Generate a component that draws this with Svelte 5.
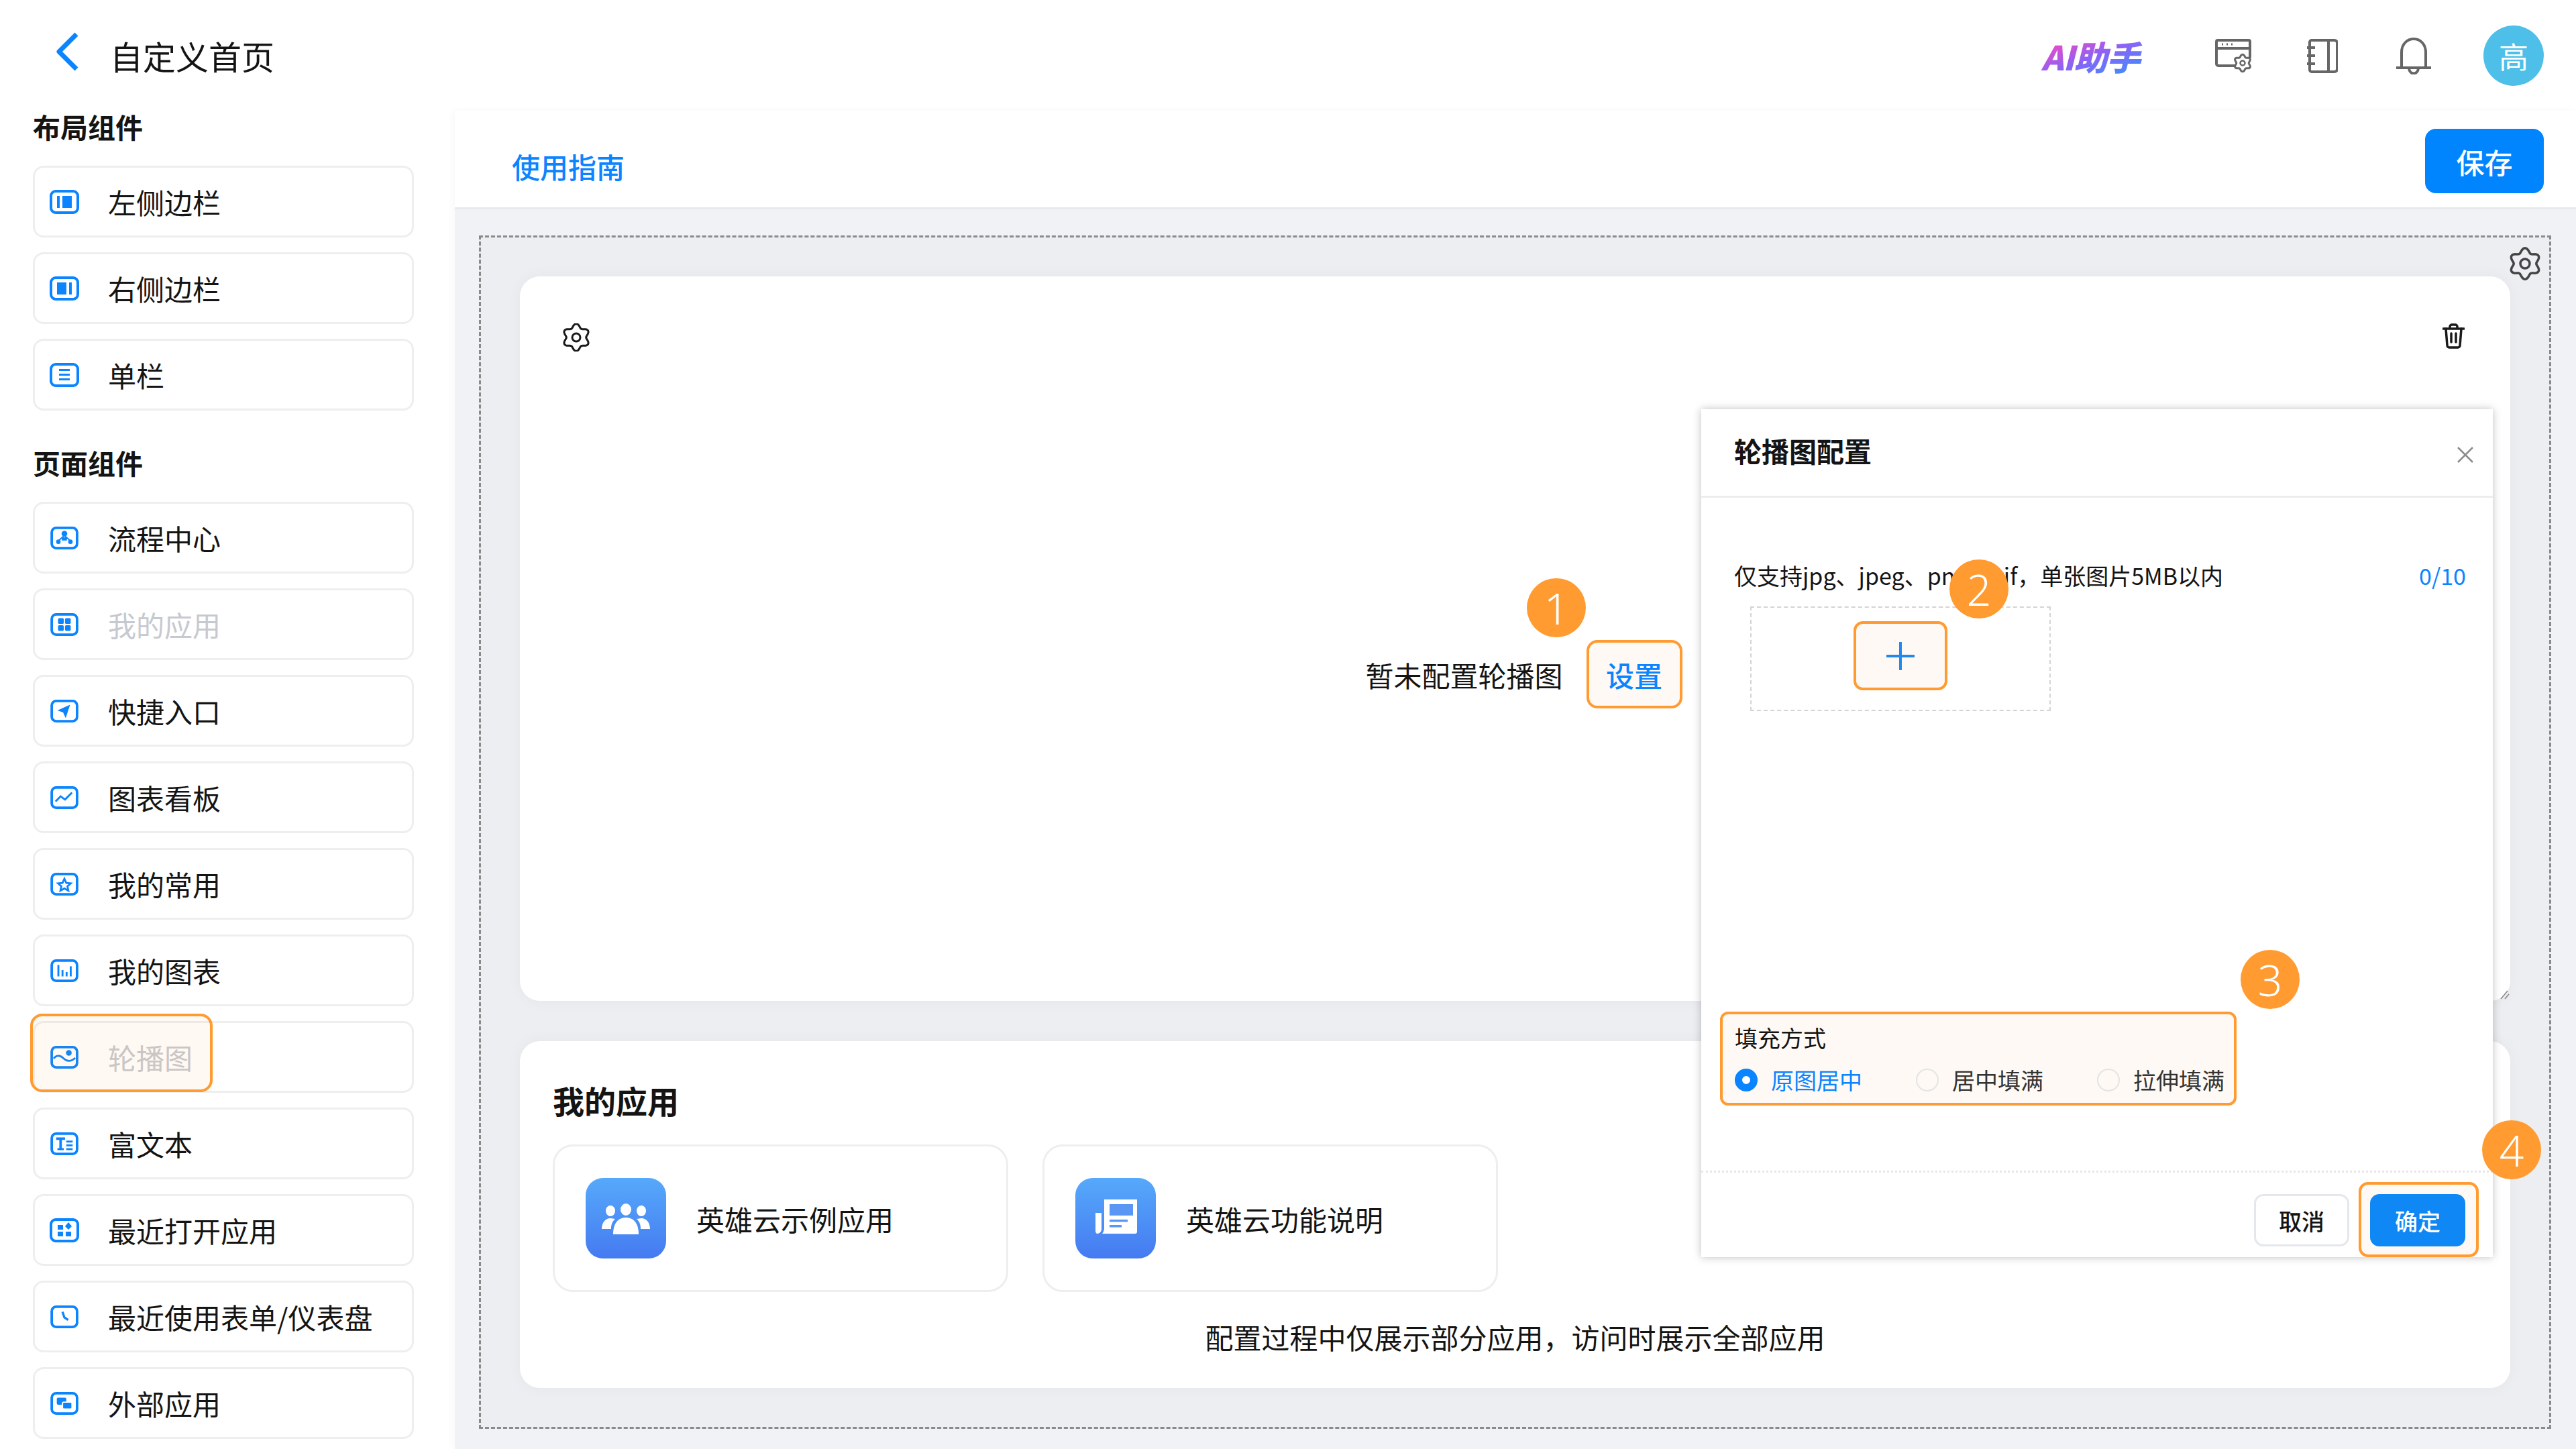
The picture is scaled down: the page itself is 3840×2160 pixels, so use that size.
<script>
  // outline of a scalloped six lobe cog, used by all the settings icons
  function cog(cx, cy, r, amp) {
    let d = '';
    for (let i = 0; i < 96; i++) {
      const t = (i / 96) * Math.PI * 2;
      const rad = r + amp * Math.cos(6 * (t - Math.PI / 2));
      const x = cx + rad * Math.cos(t);
      const y = cy + rad * Math.sin(t);
      d += (i ? 'L' : 'M') + x.toFixed(2) + ' ' + y.toFixed(2);
    }
    return d + 'Z';
  }

  const glyphs = {
    left: '<rect x="11" y="9" width="4" height="18"/><rect x="19" y="9" width="14" height="18"/>',
    right: '<rect x="11" y="9" width="14" height="18"/><rect x="29" y="9" width="4" height="18"/>',
    single: '<rect x="14" y="9" width="16" height="3"/><rect x="14" y="16" width="16" height="3"/><rect x="14" y="23" width="16" height="3"/>',
    flow: '<circle cx="22" cy="11" r="4.5"/><circle cx="12.5" cy="24" r="3.5"/><circle cx="31.5" cy="24" r="3.5"/><path d="M22 14 L13 22 M22 14 L31 22 M19 18h6v3h-6z" stroke="#0a84ff" stroke-width="2"/>',
    apps: '<rect x="12" y="8" width="9" height="9" rx="2"/><rect x="23" y="8" width="9" height="9" rx="2"/><rect x="12" y="19" width="9" height="9" rx="2"/><rect x="23" y="19" width="9" height="9" rx="2"/>',
    quick: '<path d="M31 8 L11 17 L20 20 L24 29Z"/>',
    chart: '<path d="M8 24 L16 16 L23 21 L34 10" fill="none" stroke="#0a84ff" stroke-width="3"/>',
    star: '<path d="M22 9.5 L25 16 L32 16.8 L26.8 21.4 L28.2 28.2 L22 24.8 L15.8 28.2 L17.2 21.4 L12 16.8 L19 16Z" fill="none" stroke="#0a84ff" stroke-width="3"/>',
    bars: '<rect x="11" y="9" width="3" height="18"/><rect x="17.5" y="17" width="3" height="10"/><rect x="24" y="20" width="3" height="7"/><rect x="30.5" y="11" width="3" height="16"/>',
    wave: '<path d="M5 20 C11 13 17 16 21 20 S32 26 39 19" fill="none" stroke="#0a84ff" stroke-width="3"/><circle cx="29" cy="11" r="4.5"/>',
    rich: '<path d="M9 8h14v4h-5v13h3v3h-10v-3h3v-13h-5z"/><rect x="25" y="13" width="10" height="3"/><rect x="25" y="19" width="10" height="3"/><rect x="25" y="25" width="10" height="3"/>',
    recent: '<rect x="12" y="10" width="8" height="7"/><path d="M28 6 L33 12 L28 17 L23 12Z"/><rect x="12" y="20" width="8" height="7"/><rect x="24" y="20" width="8" height="7"/>',
    clock: '<path d="M19 10 L22 19 L28 23" fill="none" stroke="#0a84ff" stroke-width="3.5"/>',
    ext: '<rect x="10" y="9" width="15" height="11" rx="2"/><rect x="19" y="16" width="15" height="11" rx="2" stroke="#fff" stroke-width="2"/>'
  };

  const layoutItems = [
    { label: '左侧边栏', icon: 'left', wide: true },
    { label: '右侧边栏', icon: 'right', wide: true },
    { label: '单栏', icon: 'single', wide: true }
  ];
  const pageItems = [
    { label: '流程中心', icon: 'flow' },
    { label: '我的应用', icon: 'apps', off: true },
    { label: '快捷入口', icon: 'quick' },
    { label: '图表看板', icon: 'chart' },
    { label: '我的常用', icon: 'star' },
    { label: '我的图表', icon: 'bars' },
    { label: '轮播图', icon: 'wave', off: true, mark: true },
    { label: '富文本', icon: 'rich' },
    { label: '最近打开应用', icon: 'recent', wide: true },
    { label: '最近使用表单/仪表盘', icon: 'clock' },
    { label: '外部应用', icon: 'ext' }
  ];
  const fills = [
    { label: '原图居中', on: true },
    { label: '居中填满' },
    { label: '拉伸填满' }
  ];
</script>

{#snippet item(it)}
  <div class="item" class:off={it.off}>
    {#if it.mark}<span class="item-mark"></span>{/if}
    <svg class="item-icon" class:wide={it.wide} viewBox="0 0 44 36" fill="#0a84ff">
      <rect x="2" y="2" width="40" height="32" rx="7" fill="none" stroke="#0a84ff" stroke-width="4" />
      {@html glyphs[it.icon]}
    </svg>
    <span>{it.label}</span>
  </div>
{/snippet}

<div class="app">
  <header class="topbar">
    <div class="page-title">
      <svg class="back" viewBox="0 0 36 60"><path d="M31 4 L5 30 L31 56" /></svg>
      <span>自定义首页</span>
    </div>
    <div class="tools">
      <span class="ai">AI助手</span>
      <svg class="tool win" viewBox="0 0 54 50">
        <path d="M32 40H5a3 3 0 0 1-3-3V4a2 2 0 0 1 2-2h46a2 2 0 0 1 2 2v24" />
        <path d="M2 14H52" />
        <path d="M10 8h2M17 8h2M24 8h2" stroke-width="3" />
        <path d={cog(41, 36, 11, 1.8)} stroke-width="3" fill="#fff" />
        <circle cx="41" cy="36" r="3.5" stroke-width="2.5" />
      </svg>
      <svg class="tool book" viewBox="0 0 47 51">
        <path d="M8 2H42a4 4 0 0 1 4 4V45a4 4 0 0 1-4 4H8a3 3 0 0 1-3-3V5a3 3 0 0 1 3-3Z" />
        <path d="M33 2V49" />
        <path d="M1 13H13M1 25H13M1 37H13" />
      </svg>
      <svg class="tool bell" viewBox="0 0 54 55">
        <path d="M9 44V22C9 10 17 2 27 2S45 10 45 22V44" />
        <path d="M1 45H53" />
        <path d="M20 46C21 56 33 56 34 46" />
      </svg>
      <div class="avatar">高</div>
    </div>
  </header>

  <div class="body">
    <aside class="sidebar">
      <h3>布局组件</h3>
      <div class="items">
        {#each layoutItems as it}{@render item(it)}{/each}
      </div>
      <h3 class="next">页面组件</h3>
      <div class="items">
        {#each pageItems as it}{@render item(it)}{/each}
      </div>
    </aside>

    <main class="main">
      <div class="toolbar">
        <span class="guide">使用指南</span>
        <button class="save">保存</button>
      </div>
      <div class="stage">
        <svg class="stage-gear" viewBox="0 0 50 50">
          <path d={cog(25, 25, 20, 3.2)} />
          <circle cx="25" cy="25" r="7" />
        </svg>

        <section class="card banner">
          <div class="banner-top">
            <svg class="gear" viewBox="0 0 42 42">
              <path d={cog(21, 21, 17.5, 2.8)} />
              <circle cx="21" cy="21" r="6" />
            </svg>
            <svg class="trash" viewBox="0 0 33 38">
              <path d="M1 8H32M11 8V5a3 3 0 0 1 3-3h5a3 3 0 0 1 3 3V8" />
              <path d="M5 8L7 33a3 3 0 0 0 3 3H23a3 3 0 0 0 3-3L28 8" />
              <path d="M13 15V28M20 15V28" />
            </svg>
          </div>
          <div class="empty">
            <span>暂未配置轮播图</span>
            <button class="set">设置</button>
          </div>
          <svg class="resize" viewBox="0 0 14 14"><path d="M1 13L11 1M7 13L13 6" /></svg>
        </section>

        <section class="card apps">
          <h2>我的应用</h2>
          <div class="app-row">
            <div class="app-card">
              <svg class="app-icon" viewBox="0 0 120 120">
                <defs>
                  <linearGradient id="tile" x1="0" y1="0" x2="0" y2="1">
                    <stop offset="0" stop-color="#56a9fb" />
                    <stop offset="1" stop-color="#457af1" />
                  </linearGradient>
                </defs>
                <rect width="120" height="120" rx="26" fill="url(#tile)" />
                <g fill="#fff">
                  <ellipse cx="37" cy="49" rx="7" ry="8" />
                  <ellipse cx="60" cy="47" rx="8" ry="9" />
                  <ellipse cx="83" cy="49" rx="7" ry="8" />
                  <path d="M24 76C24 66 30 60 37 60L44 61C39 66 38 70 38 76Z" />
                  <path d="M96 76C96 66 90 60 83 60L76 61C81 66 82 70 82 76Z" />
                  <path d="M41 84C41 68 48 59 60 59S79 68 79 84Z" />
                </g>
              </svg>
              <span>英雄云示例应用</span>
            </div>
            <div class="app-card">
              <svg class="app-icon" viewBox="0 0 120 120">
                <rect width="120" height="120" rx="26" fill="url(#tile)" />
                <path d="M43 32H92V80a3 3 0 0 1-3 3H40C42 80 43 78 43 74Z" fill="#fff" />
                <path d="M30 52H39V76C39 80 36 83 33 83C31 83 30 81 30 79Z" fill="#fff" />
                <rect x="51" y="39" width="35" height="17" fill="#5a97f5" />
                <rect x="51" y="62" width="27" height="3.5" fill="#5a97f5" />
                <rect x="51" y="70" width="18" height="3.5" fill="#5a97f5" />
              </svg>
              <span>英雄云功能说明</span>
            </div>
          </div>
          <p class="note">配置过程中仅展示部分应用，访问时展示全部应用</p>
        </section>
      </div>
    </main>
  </div>

  <div class="dialog">
    <div class="dialog-head">
      <strong>轮播图配置</strong>
      <svg class="close" viewBox="0 0 24 24"><path d="M1 1L23 23M23 1L1 23" /></svg>
    </div>
    <div class="dialog-body">
      <div class="hint-row">
        <span>仅支持jpg、jpeg、png、gif，单张图片5MB以内</span>
        <span class="count">0/10</span>
      </div>
      <div class="upload">
        <div class="plus">
          <svg viewBox="0 0 44 44"><path d="M22 1V43M1 22H43" /></svg>
        </div>
      </div>
      <div class="fill-box">
        <div class="fill-label">填充方式</div>
        <div class="radios">
          {#each fills as f}
            <div class="radio" class:on={f.on}>
              <i></i>
              <span>{f.label}</span>
            </div>
          {/each}
        </div>
      </div>
    </div>
    <div class="dialog-foot">
      <button class="cancel">取消</button>
      <div class="ok-wrap"><button class="ok">确定</button></div>
    </div>
  </div>

  <div class="badge b1">1</div>
  <div class="badge b2">2</div>
  <div class="badge b3">3</div>
  <div class="badge b4">4</div>
</div>

<style>
  :global(body) {
    margin: 0;
    background: #fff;
  }
  .app {
    position: relative;
    width: 3840px;
    height: 2160px;
    overflow: hidden;
    font-family: "Noto Sans CJK SC", "Noto Sans", sans-serif;
    color: #141414;
    font-size: 42px;
  }
  button {
    font-family: inherit;
    cursor: pointer;
  }

  /* top bar */
  .topbar {
    height: 165px;
    display: flex;
    justify-content: space-between;
    align-items: flex-start;
    box-sizing: border-box;
    padding: 38px 48px 0 83px;
  }
  .page-title {
    display: flex;
    align-items: center;
    font-size: 49px;
    height: 90px;
    gap: 45px;
    margin-top: -1px;
  }
  .back {
    width: 36px;
    height: 60px;
    margin-top: -10px;
  }
  .back path {
    fill: none;
    stroke: #0a84ff;
    stroke-width: 7;
    stroke-linejoin: round;
  }
  .tools {
    display: flex;
    align-items: center;
    height: 90px;
  }
  .ai {
    font-size: 50px;
    line-height: 60px;
    font-weight: 900;
    font-style: italic;
    letter-spacing: -1px;
    background: linear-gradient(160deg, #ff45c0 8%, #8a63f5 48%, #3f8dff 85%);
    -webkit-background-clip: text;
    background-clip: text;
    color: transparent;
    width: 180px;
    margin-right: 79px;
  }
  .tool {
    fill: none;
    stroke: #666;
    stroke-width: 4;
  }
  .win {
    width: 54px;
    height: 50px;
    margin-right: 82px;
  }
  .book {
    width: 47px;
    height: 51px;
    margin-right: 86px;
  }
  .bell {
    width: 54px;
    height: 55px;
    margin-right: 77px;
  }
  .avatar {
    width: 90px;
    height: 90px;
    border-radius: 50%;
    background: #4dbfe8;
    color: #fff;
    display: flex;
    align-items: center;
    justify-content: center;
    font-size: 44px;
  }

  /* sidebar */
  .body {
    display: flex;
    height: 1995px;
  }
  .sidebar {
    width: 678px;
    flex: none;
    box-sizing: border-box;
    padding-left: 49px;
    position: relative;
    z-index: 1;
  }
  .sidebar h3 {
    margin: 0 0 36px;
    font-size: 41px;
    line-height: 46px;
    font-weight: 700;
  }
  .sidebar h3.next {
    margin-top: 54px;
  }
  .items {
    display: flex;
    flex-direction: column;
    gap: 22px;
  }
  .item {
    position: relative;
    width: 568px;
    height: 107px;
    box-sizing: border-box;
    border: 3px solid #eeeeee;
    border-radius: 16px;
    display: flex;
    align-items: center;
    padding-left: 22px;
    background: #fff;
  }
  .item.off {
    color: #c6c9cf;
  }
  .item-mark {
    position: absolute;
    left: -7px;
    top: -14px;
    width: 272px;
    height: 117px;
    box-sizing: border-box;
    border: 4px solid #ff9b30;
    border-radius: 18px;
    background: rgba(255, 155, 48, 0.06);
  }
  .item-icon {
    width: 42px;
    height: 34px;
    margin: 0 44px 0 1px;
    flex: none;
  }
  .item-icon.wide {
    width: 44px;
    height: 36px;
    margin: 0 43px 0 0;
  }

  /* main area */
  .main {
    flex: 1;
    min-width: 0;
    display: flex;
    flex-direction: column;
    background: #f1f2f5;
    box-shadow: -3px 0 10px rgba(0, 0, 0, 0.03);
  }
  .toolbar {
    height: 147px;
    box-sizing: border-box;
    background: #fff;
    border-bottom: 3px solid #e8e9ec;
    display: flex;
    justify-content: space-between;
    align-items: flex-start;
    padding: 27px 48px 0 85px;
  }
  .guide {
    color: #0a84ff;
    font-weight: 500;
    margin-top: 31px;
    line-height: 50px;
  }
  .save {
    width: 177px;
    height: 96px;
    border: 0;
    border-radius: 16px;
    background: #0085ff;
    color: #fff;
    font-size: 42px;
    font-weight: 500;
  }
  .stage {
    position: relative;
    margin: 39px 37px 30px 36px;
    flex: 1;
    box-sizing: border-box;
    border: 3px dashed #8a8a8a;
    background: #edeef2;
    padding: 58px;
    display: flex;
    flex-direction: column;
    gap: 60px;
  }
  .stage-gear {
    position: absolute;
    right: 11px;
    top: 14px;
    width: 50px;
    height: 50px;
    fill: none;
    stroke: #444;
    stroke-width: 3.5;
  }
  .card {
    position: relative;
    background: #fff;
    border-radius: 30px;
    box-shadow: 0 0 24px rgba(0, 0, 0, 0.04);
  }
  .banner {
    height: 1080px;
    box-sizing: border-box;
    padding: 70px 68px 0 63px;
  }
  .banner-top {
    display: flex;
    justify-content: space-between;
  }
  .gear {
    width: 42px;
    height: 42px;
    fill: none;
    stroke: #1a1a1a;
    stroke-width: 3;
  }
  .trash {
    width: 33px;
    height: 38px;
    fill: none;
    stroke: #1a1a1a;
    stroke-width: 3.5;
    stroke-linecap: round;
  }
  .empty {
    margin-top: 430px;
    display: flex;
    align-items: center;
    justify-content: center;
    gap: 35px;
    padding-left: 31px;
  }
  .set {
    width: 143px;
    height: 102px;
    box-sizing: border-box;
    border: 4px solid #ff9b30;
    border-radius: 16px;
    background: #fef9f4;
    color: #0a84ff;
    font-size: 42px;
    font-weight: 500;
  }
  .resize {
    position: absolute;
    right: 1px;
    bottom: 2px;
    width: 14px;
    height: 14px;
    fill: none;
    stroke: #888;
    stroke-width: 1.5;
  }
  .apps {
    flex: 1;
    box-sizing: border-box;
    padding: 60px 49px 0;
  }
  .apps h2 {
    margin: 0 0 38px;
    font-size: 47px;
    line-height: 56px;
    font-weight: 700;
  }
  .app-row {
    display: flex;
    gap: 51px;
  }
  .app-card {
    width: 679px;
    height: 220px;
    box-sizing: border-box;
    border: 3px solid #eeeeee;
    border-radius: 30px;
    display: flex;
    align-items: center;
    padding-left: 46px;
    gap: 45px;
  }
  .app-icon {
    width: 120px;
    height: 120px;
    flex: none;
  }
  .note {
    margin: 42px 0 0;
    text-align: center;
    line-height: 50px;
  }

  /* dialog */
  .dialog {
    position: absolute;
    left: 2536px;
    top: 610px;
    width: 1180px;
    height: 1264px;
    background: #fff;
    box-shadow: 0 0 12px rgba(0, 0, 0, 0.25);
    display: flex;
    flex-direction: column;
    z-index: 2;
    font-size: 34px;
  }
  .dialog-head {
    height: 132px;
    box-sizing: border-box;
    border-bottom: 3px solid #eceded;
    display: flex;
    align-items: center;
    justify-content: space-between;
    padding: 0 29px 8px 49px;
  }
  .dialog-head strong {
    font-size: 41px;
    font-weight: 700;
  }
  .close {
    width: 24px;
    height: 24px;
    fill: none;
    stroke: #8c8c8c;
    stroke-width: 2.5;
    margin-top: 14px;
  }
  .dialog-body {
    flex: 1;
    padding-top: 91px;
  }
  .hint-row {
    display: flex;
    justify-content: space-between;
    line-height: 50px;
    padding: 0 40px 0 49px;
  }
  .count {
    color: #0a84ff;
  }
  .upload {
    width: 448px;
    height: 156px;
    box-sizing: border-box;
    margin: 21px 0 0 73px;
    border: 2px dashed #d4d4d4;
    display: flex;
    justify-content: center;
    padding-top: 20px;
  }
  .plus {
    width: 140px;
    height: 103px;
    box-sizing: border-box;
    border: 4px solid #ff9b30;
    border-radius: 14px;
    background: #fef9f4;
    display: flex;
    align-items: center;
    justify-content: center;
  }
  .plus svg {
    width: 44px;
    height: 44px;
    fill: none;
    stroke: #2288ee;
    stroke-width: 4;
  }
  .fill-box {
    width: 770px;
    height: 140px;
    box-sizing: border-box;
    margin: 448px 0 0 28px;
    border: 4px solid #ff9b30;
    border-radius: 12px;
    background: #fef9f4;
    padding: 12px 0 0 18px;
  }
  .fill-label {
    line-height: 46px;
  }
  .radios {
    display: flex;
    gap: 80px;
    margin-top: 17px;
    line-height: 46px;
  }
  .radio {
    display: flex;
    align-items: center;
    gap: 20px;
    color: #333;
  }
  .radio i {
    width: 34px;
    height: 34px;
    box-sizing: border-box;
    border-radius: 50%;
    border: 2px solid #e4e4e4;
  }
  .radio.on {
    color: #0a84ff;
  }
  .radio.on i {
    border: 11px solid #0a84ff;
    background: #fff;
  }
  .dialog-foot {
    height: 129px;
    box-sizing: border-box;
    border-top: 3px dotted #e6e6e6;
    display: flex;
    justify-content: flex-end;
    align-items: flex-start;
    gap: 14px;
    padding: 14px 21px 0 0;
  }
  .dialog-foot button {
    width: 142px;
    height: 78px;
    border-radius: 14px;
    font-size: 34px;
    font-weight: 500;
  }
  .cancel {
    margin-top: 18px;
    box-sizing: border-box;
    border: 3px solid #e4e7ec;
    background: #fff;
    color: #141414;
  }
  .ok-wrap {
    width: 179px;
    height: 112px;
    box-sizing: border-box;
    border: 4px solid #ff9b30;
    border-radius: 14px;
    background: #fef9f4;
    padding: 14px 0 0 13px;
  }
  .ok {
    border: 0;
    background: #0f87f5;
    color: #fff;
  }

  /* step markers */
  .badge {
    position: absolute;
    width: 88px;
    height: 88px;
    border-radius: 50%;
    background: #ff9b30;
    color: #fff;
    font-size: 64px;
    font-weight: 300;
    font-family: "Noto Sans", "Noto Sans CJK SC", sans-serif;
    display: flex;
    align-items: center;
    justify-content: center;
    z-index: 3;
  }
  .b1 { left: 2276px; top: 862px; }
  .b2 { left: 2906px; top: 834px; }
  .b3 { left: 3340px; top: 1416px; }
  .b4 { left: 3700px; top: 1670px; }
</style>
